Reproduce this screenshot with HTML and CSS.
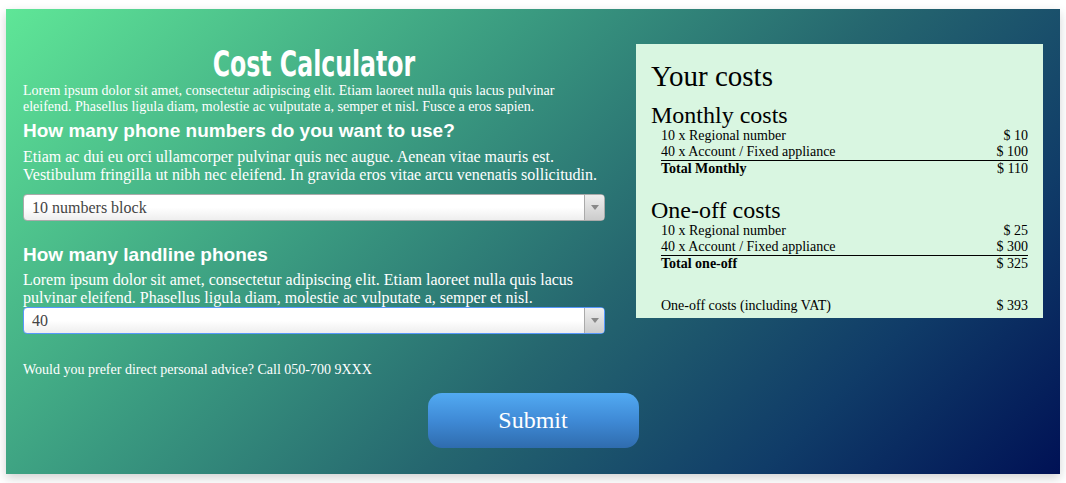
FILE: index.html
```html
<!DOCTYPE html>
<html lang="en">
<head>
<meta charset="utf-8">
<title>Cost Calculator</title>
<link rel="stylesheet" href="styles.css">
</head>
<body>
<div class="calc">
  <div class="cols">
    <div class="form">
      <h1 class="title"><span class="title-text">Cost Calculator</span></h1>
      <p class="intro">Lorem ipsum dolor sit amet, consectetur adipiscing elit. Etiam laoreet nulla quis lacus pulvinar eleifend. Phasellus ligula diam, molestie ac vulputate a, semper et nisl. Fusce a eros sapien.</p>
      <h3 class="q q-first">How many phone numbers do you want to use?</h3>
      <p class="desc desc-first">Etiam ac dui eu orci ullamcorper pulvinar quis nec augue. Aenean vitae mauris est. Vestibulum fringilla ut nibh nec eleifend. In gravida eros vitae arcu venenatis sollicitudin.</p>
      <div class="select select-first">
        <span class="select-value">10 numbers block</span>
        <span class="select-arrow"><span class="tri"></span></span>
      </div>
      <h3 class="q q-second">How many landline phones</h3>
      <p class="desc desc-second">Lorem ipsum dolor sit amet, consectetur adipiscing elit. Etiam laoreet nulla quis lacus pulvinar eleifend. Phasellus ligula diam, molestie ac vulputate a, semper et nisl.</p>
      <div class="select select-focus">
        <span class="select-value">40</span>
        <span class="select-arrow"><span class="tri"></span></span>
      </div>
      <p class="advice">Would you prefer direct personal advice? Call 050-700 9XXX</p>
    </div>
    <div class="costs">
      <h2 class="costs-title">Your costs</h2>
      <h4 class="costs-head">Monthly costs</h4>
      <div class="rows">
        <div class="row"><span>10 x Regional number</span><span>$ 10</span></div>
        <div class="row"><span>40 x Account / Fixed appliance</span><span>$ 100</span></div>
        <div class="row total"><span>Total Monthly</span><span>$ 110</span></div>
      </div>
      <h4 class="costs-head costs-head-second">One-off costs</h4>
      <div class="rows">
        <div class="row"><span>10 x Regional number</span><span>$ 25</span></div>
        <div class="row"><span>40 x Account / Fixed appliance</span><span>$ 300</span></div>
        <div class="row total"><span>Total one-off</span><span>$ 325</span></div>
      </div>
      <div class="rows vat">
        <div class="row"><span>One-off costs (including VAT)</span><span>$ 393</span></div>
      </div>
    </div>
  </div>
  <div class="actions">
    <button class="submit" type="button">Submit</button>
  </div>
</div>
</body>
</html>
```

FILE: styles.css
```css
html, body {
  margin: 0;
  padding: 0;
  background: #ffffff;
}

body {
  padding: 9px 6px 9px 6px;
  font-family: "Liberation Serif", "Times New Roman", serif;
}

.calc {
  width: 1054px;
  height: 465px;
  box-sizing: border-box;
  padding: 35px 17px 0 17px;
  background: linear-gradient(135deg, #5fe697 0%, #3a9a80 35%, #25666f 58%, #103c68 80%, #001155 100%);
  box-shadow: 0 4px 10px rgba(0, 0, 0, 0.18);
  color: #ffffff;
}

.cols {
  display: grid;
  grid-template-columns: 582px 407px;
  column-gap: 31px;
  align-items: start;
}

.form {
  display: flex;
  flex-direction: column;
}

.title {
  margin: 0;
  height: 39px;
  font-family: "DejaVu Sans Condensed", "Liberation Sans", sans-serif;
  font-stretch: condensed;
  font-weight: 700;
  font-size: 35px;
  line-height: 41px;
  text-align: center;
}

.title-text {
  display: inline-block;
  transform: scaleX(0.75);
  transform-origin: center;
}

.intro {
  margin: 0;
  font-size: 14px;
  line-height: 16px;
}

.q {
  margin: 0;
  font-family: "Liberation Sans", Arial, sans-serif;
  font-weight: 700;
  font-size: 19px;
  line-height: 21px;
}

.q-first {
  margin-top: 5px;
}

.q-second {
  margin-top: 23px;
}

.desc {
  margin: 0;
  font-size: 16px;
  line-height: 18px;
}

.desc-first {
  margin-top: 7px;
}

.desc-second {
  margin-top: 6px;
}

.select {
  display: flex;
  height: 27px;
  box-sizing: border-box;
  border: 1px solid #aaaaaa;
  border-radius: 4px;
  background: linear-gradient(to bottom, #ffffff 0%, #ffffff 50%, #eeeeee 100%);
  color: #444444;
  overflow: hidden;
}

.select-first {
  margin-top: 10px;
}

.select-focus {
  border-color: #5897fb;
}

.select-value {
  flex: 1;
  padding-left: 8px;
  font-size: 16px;
  line-height: 26px;
}

.select-arrow {
  width: 19px;
  display: flex;
  align-items: center;
  justify-content: center;
  border-left: 1px solid #aaaaaa;
  background: linear-gradient(to bottom, #eeeeee 0%, #cccccc 100%);
}

.tri {
  width: 0;
  height: 0;
  border-left: 4px solid transparent;
  border-right: 4px solid transparent;
  border-top: 5px solid #888888;
}

.advice {
  margin: 28px 0 0 0;
  font-size: 14px;
  line-height: 16px;
}

.costs {
  background: #d9f6e1;
  color: #000000;
  padding: 16px 15px 4px 15px;
}

.costs-title {
  margin: 0;
  font-weight: 400;
  font-size: 29px;
  line-height: 33px;
}

.costs-head {
  margin: 9px 0 0 0;
  font-weight: 400;
  font-size: 24px;
  line-height: 26px;
}

.costs-head-second {
  margin-top: 20px;
}

.rows {
  padding-left: 10px;
  font-size: 14px;
  line-height: 16px;
}

.row {
  display: flex;
  justify-content: space-between;
}

.total {
  border-top: 1px solid #000000;
  font-weight: 700;
}

.total span:last-child {
  font-weight: 400;
}

.vat {
  margin-top: 26px;
}

.actions {
  display: flex;
  justify-content: center;
  margin-top: 15px;
}

.submit {
  width: 211px;
  height: 55px;
  border: 0;
  border-radius: 14px;
  background: linear-gradient(to bottom, #52aaf2 0%, #3f8ad6 50%, #2f6cae 100%);
  color: #ffffff;
  font-family: "Liberation Serif", "Times New Roman", serif;
  font-size: 24px;
  padding: 0;
}
```
